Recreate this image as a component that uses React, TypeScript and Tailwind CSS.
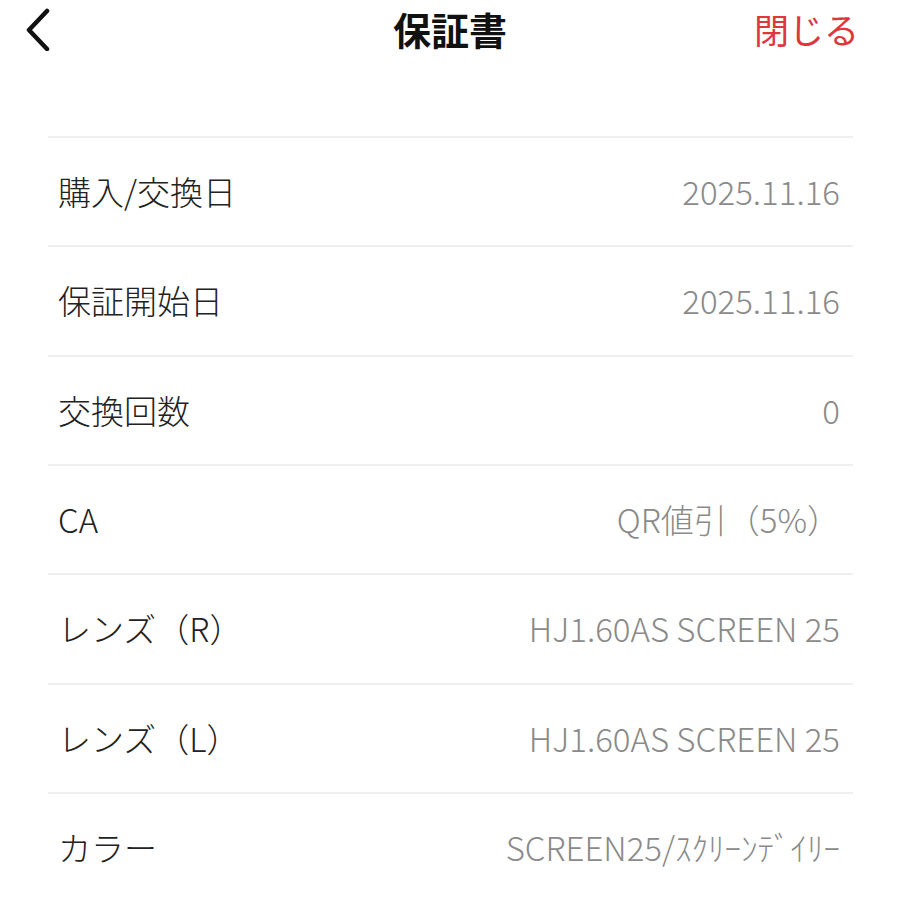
import React from 'react';

const rows: { label: string; value: string }[] = [
  { label: '購入/交換日', value: '2025.11.16' },
  { label: '保証開始日', value: '2025.11.16' },
  { label: '交換回数', value: '0' },
  { label: 'CA', value: 'QR値引（5%）' },
  { label: 'レンズ（R）', value: 'HJ1.60AS SCREEN 25' },
  { label: 'レンズ（L）', value: 'HJ1.60AS SCREEN 25' },
  { label: 'カラー', value: 'SCREEN25/ｽｸﾘｰﾝﾃﾞｲﾘｰ' },
];

export default function App() {
  return (
    <div
      className="w-[900px] h-[900px] overflow-hidden bg-white"
      style={{ fontFamily: '"Noto Sans CJK JP", "Noto Sans", sans-serif' }}
    >
      {/* Header */}
      <div className="h-[58px] pt-[7px] px-[22px] grid grid-cols-[1fr_auto_1fr] items-start">
        <button className="w-[32px] h-[44px] flex items-center justify-center">
          <svg width="30" height="44" viewBox="0 0 30 44" fill="none">
            <path d="M24 4 L6 23 L24 42" stroke="#111" strokeWidth="4.5" strokeLinecap="round" strokeLinejoin="round" />
          </svg>
        </button>
        <h1 className="text-[38px] font-bold text-[#111] leading-[44px]">保証書</h1>
        <span className="justify-self-end mr-[19px] text-[35px] text-[#e0353c] leading-[44px]">閉じる</span>
      </div>

      {/* Rows */}
      <div className="mt-[78px] mx-[48px] w-[805px]">
        {rows.map((row) => (
          <div
            key={row.label}
            className="h-[109.33px] border-t-2 border-[#efefef] flex items-center justify-between pl-[10px] pr-[13px]"
          >
            <span className="text-[33px] text-[#222] leading-none font-light">{row.label}</span>
            <span className="text-[33px] text-[#8a8a8a] leading-none font-light">{row.value}</span>
          </div>
        ))}
      </div>
    </div>
  );
}
